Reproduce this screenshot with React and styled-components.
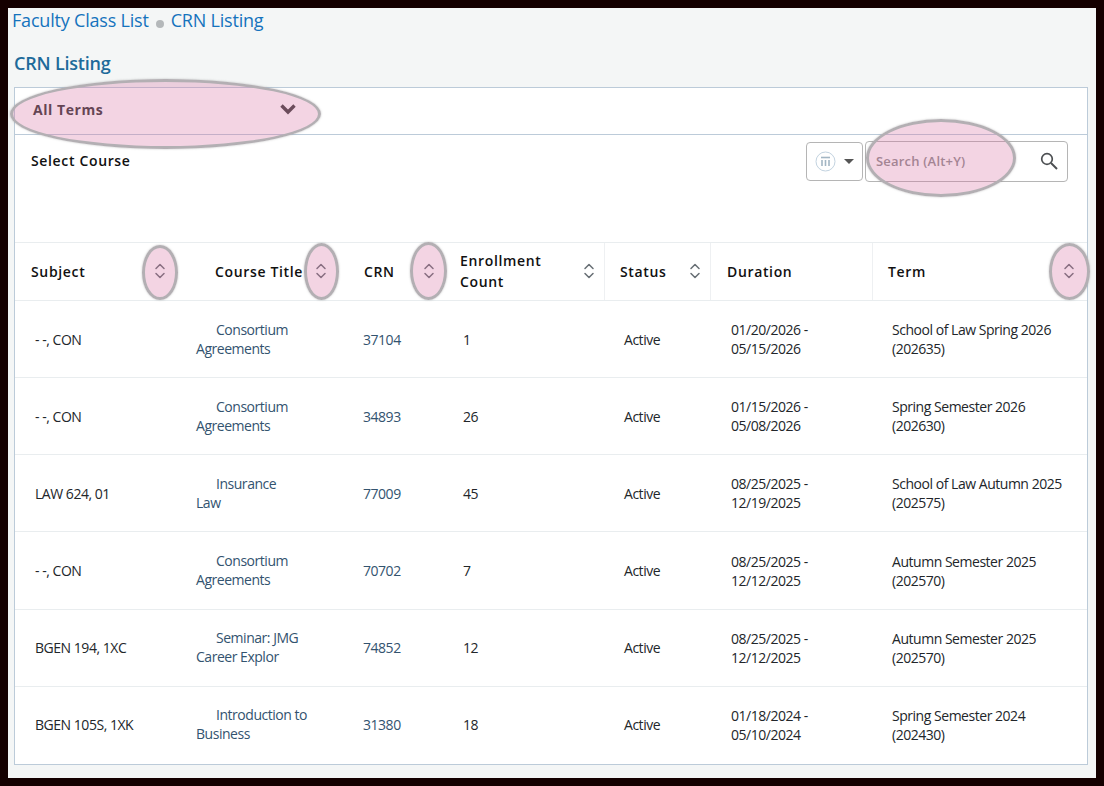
import React from 'react';
import styled, { createGlobalStyle } from 'styled-components';

const GlobalStyle = createGlobalStyle`
  html, body {
    margin: 0;
    padding: 0;
    background: #140000;
    font-family: "Open Sans", "Liberation Sans", sans-serif;
  }
  * { box-sizing: border-box; }
`;

const Frame = styled.div`
  position: relative;
  width: 1104px;
  height: 786px;
  border: 8px solid #140000;
  background: #f4f6f6;
  overflow: hidden;
`;

const Breadcrumbs = styled.nav`
  display: flex;
  align-items: center;
  height: 23px;
  padding-left: 4px;
  font-size: 18px;
  color: #1573bd;
  letter-spacing: -0.2px;
`;

const Dot = styled.span`
  width: 8px;
  height: 8px;
  margin: 8px 7px 0 7px;
  border-radius: 50%;
  background: #b4b8ba;
`;

const Heading = styled.h1`
  margin: 17px 0 0 6px;
  height: 39px;
  font-size: 18px;
  line-height: 30px;
  font-weight: 600;
  color: #1d6a9a;
  letter-spacing: -0.2px;
`;

const Panel = styled.section`
  margin: 0 8px 0 6px;
  height: 678px;
  border: 1px solid #bccbd9;
  background: #fff;
`;

const TermBar = styled.div`
  height: 47px;
  padding: 0 0 4px 18px;
  display: flex;
  align-items: center;
  border-bottom: 1px solid #bccbd9;
`;

const TermSelect = styled.div`
  display: flex;
  align-items: center;
  justify-content: space-between;
  width: 264px;
  font-size: 14px;
  font-weight: 700;
  letter-spacing: 0.55px;
  color: #333;
`;

const Toolbar = styled.div`
  display: flex;
  justify-content: space-between;
  height: 107px;
  padding: 6px 19px 0 16px;
`;

const SelectLabel = styled.div`
  padding-top: 10px;
  font-size: 14px;
  font-weight: 600;
  letter-spacing: 0.65px;
  color: #111;
`;

const Tools = styled.div`
  display: flex;
  gap: 2px;
  height: 41px;
`;

const ColumnsButton = styled.div`
  display: flex;
  align-items: center;
  gap: 8px;
  width: 57px;
  height: 39px;
  margin-top: 1px;
  padding-left: 8px;
  border: 1px solid #b5b5b5;
  border-radius: 4px;
  background: #fff;
`;

const Caret = styled.span`
  width: 0;
  height: 0;
  border-left: 5.500px solid transparent;
  border-right: 5.500px solid transparent;
  border-top: 5.500px solid #555;
`;

const SearchBox = styled.div`
  display: flex;
  align-items: center;
  justify-content: space-between;
  width: 203px;
  height: 41px;
  padding: 0 9px 1px 10px;
  border: 1px solid #b5b5b5;
  border-radius: 4px;
  font-size: 13px;
  font-weight: 600;
  letter-spacing: 0.2px;
  color: #8d8d8d;
`;

const Row = styled.div`
  display: grid;
  grid-template-columns: 160px 165px 103px 162px 106px 162px 1fr;
  height: ${p => p.$height}px;
  border-top: 1px solid #e9edef;
`;

const HeadCell = styled.div`
  display: flex;
  align-items: center;
  justify-content: space-between;
  padding: 0 ${p => p.$right || 0}px 1px ${p => p.$left}px;
  font-size: 14px;
  line-height: 21px;
  font-weight: 600;
  letter-spacing: 0.65px;
  color: #111;
  border-right: ${p => (p.$divider ? '1px solid #eef0f2' : 'none')};
`;

const Cell = styled.div`
  display: flex;
  align-items: center;
  padding: 0 20px ${p => p.$lift || 0}px ${p => p.$left}px;
  font-size: 14px;
  line-height: 19px;
  letter-spacing: -0.47px;
  color: ${p => p.$color || '#22262a'};
`;

const TitleText = styled.span`
  display: block;
  text-indent: 20px;
`;

const Annotation = styled.div`
  position: absolute;
  left: ${p => p.$x}px;
  top: ${p => p.$y}px;
  width: ${p => p.$w}px;
  height: ${p => p.$h}px;
  border: 3px solid #b3afb3;
  border-radius: 50%;
  background: rgba(215, 112, 162, 0.3);
  box-shadow: 0 0 2px rgba(120, 120, 120, 0.5);
`;

const Chevron = () => (
  <svg width="18" height="12" viewBox="0 0 18 12" fill="none">
    <path d="M2.500 2.500 9 9l6.500-6.500" stroke="#3d3d3d" strokeWidth="3.400" />
  </svg>
);

const SortIcon = () => (
  <svg width="12" height="18" viewBox="0 0 12 18" fill="none">
    <path d="M2 6.500 6 2.500l4 4M2 11.500l4 4 4-4" stroke="#666d73" strokeWidth="1.500" strokeLinecap="round" strokeLinejoin="round" />
  </svg>
);

const ColumnsIcon = () => (
  <svg width="21" height="21" viewBox="0 0 21 21" fill="none">
    <circle cx="10.500" cy="10.500" r="9.500" stroke="#c3d3e0" />
    <path d="M6 6.500h9" stroke="#a3b6c4" strokeWidth="1.600" />
    <path d="M7 9v6M10.500 9v6M14 9v6" stroke="#a3b6c4" strokeWidth="1.600" />
  </svg>
);

const SearchIcon = () => (
  <svg width="18" height="18" viewBox="0 0 18 18" fill="none">
    <circle cx="7" cy="7" r="5.300" stroke="#4c4f52" strokeWidth="1.700" />
    <path d="m11 11 6 6" stroke="#4c4f52" strokeWidth="2" />
  </svg>
);

const columns = [
  { label: 'Subject', left: 16, right: 9, sort: true },
  { label: 'Course Title', left: 40, right: 13, sort: true },
  { label: 'CRN', left: 24, right: 8, sort: true },
  { label: <>Enrollment<br />Count</>, left: 17, right: 9, sort: true, divider: true },
  { label: 'Status', left: 15, right: 9, sort: true, divider: true },
  { label: 'Duration', left: 16, divider: true },
  { label: 'Term', left: 15, right: 12, sort: true },
];

const rows = [
  { subject: '- -, CON', title: ['Consortium', 'Agreements'], crn: '37104', count: '1', start: '01/20/2026', end: '05/15/2026', term: 'School of Law Spring 2026', code: '(202635)', height: 77 },
  { subject: '- -, CON', title: ['Consortium', 'Agreements'], crn: '34893', count: '26', start: '01/15/2026', end: '05/08/2026', term: 'Spring Semester 2026', code: '(202630)', height: 77 },
  { subject: 'LAW 624, 01', title: ['Insurance', 'Law'], crn: '77009', count: '45', start: '08/25/2025', end: '12/19/2025', term: 'School of Law Autumn 2025', code: '(202575)', height: 77 },
  { subject: '- -, CON', title: ['Consortium', 'Agreements'], crn: '70702', count: '7', start: '08/25/2025', end: '12/12/2025', term: 'Autumn Semester 2025', code: '(202570)', height: 78, lift: 1 },
  { subject: 'BGEN 194, 1XC', title: ['Seminar: JMG', 'Career Explor'], crn: '74852', count: '12', start: '08/25/2025', end: '12/12/2025', term: 'Autumn Semester 2025', code: '(202570)', height: 77, lift: 2 },
  { subject: 'BGEN 105S, 1XK', title: ['Introduction to', 'Business'], crn: '31380', count: '18', start: '01/18/2024', end: '05/10/2024', term: 'Spring Semester 2024', code: '(202430)', height: 77, lift: 2 },
];

const annotations = [
  { x: 2, y: 71, w: 311, h: 70 },
  { x: 858, y: 111, w: 150, h: 78 },
  { x: 134, y: 237, w: 36, h: 55 },
  { x: 296, y: 235, w: 35, h: 57 },
  { x: 402, y: 234, w: 37, h: 58 },
  { x: 1041, y: 235, w: 41, h: 57 },
];

const App = () => (
  <>
    <GlobalStyle />
    <Frame>
      <Breadcrumbs>
        Faculty Class List<Dot />CRN Listing
      </Breadcrumbs>
      <Heading>CRN Listing</Heading>
      <Panel>
        <TermBar>
          <TermSelect>
            All Terms
            <Chevron />
          </TermSelect>
        </TermBar>
        <Toolbar>
          <SelectLabel>Select Course</SelectLabel>
          <Tools>
            <ColumnsButton>
              <ColumnsIcon />
              <Caret />
            </ColumnsButton>
            <SearchBox>
              Search (Alt+Y)
              <SearchIcon />
            </SearchBox>
          </Tools>
        </Toolbar>
        <Row $height={58}>
          {columns.map((c, i) => (
            <HeadCell key={i} $left={c.left} $right={c.right} $divider={c.divider}>
              <span>{c.label}</span>
              {c.sort && <SortIcon />}
            </HeadCell>
          ))}
        </Row>
        {rows.map(r => (
          <Row key={r.crn} $height={r.height}>
            <Cell $left={20} $lift={r.lift}>{r.subject}</Cell>
            <Cell $left={21} $lift={r.lift} $color="#33536f">
              <TitleText>{r.title[0]}<br />{r.title[1]}</TitleText>
            </Cell>
            <Cell $left={23} $lift={r.lift} $color="#33536f">{r.crn}</Cell>
            <Cell $left={20} $lift={r.lift}>{r.count}</Cell>
            <Cell $left={19} $lift={r.lift}>Active</Cell>
            <Cell $left={20}>{r.start} -<br />{r.end}</Cell>
            <Cell $left={19}>{r.term}<br />{r.code}</Cell>
          </Row>
        ))}
      </Panel>
      {annotations.map((a, i) => (
        <Annotation key={i} $x={a.x} $y={a.y} $w={a.w} $h={a.h} />
      ))}
    </Frame>
  </>
);

export default App;
